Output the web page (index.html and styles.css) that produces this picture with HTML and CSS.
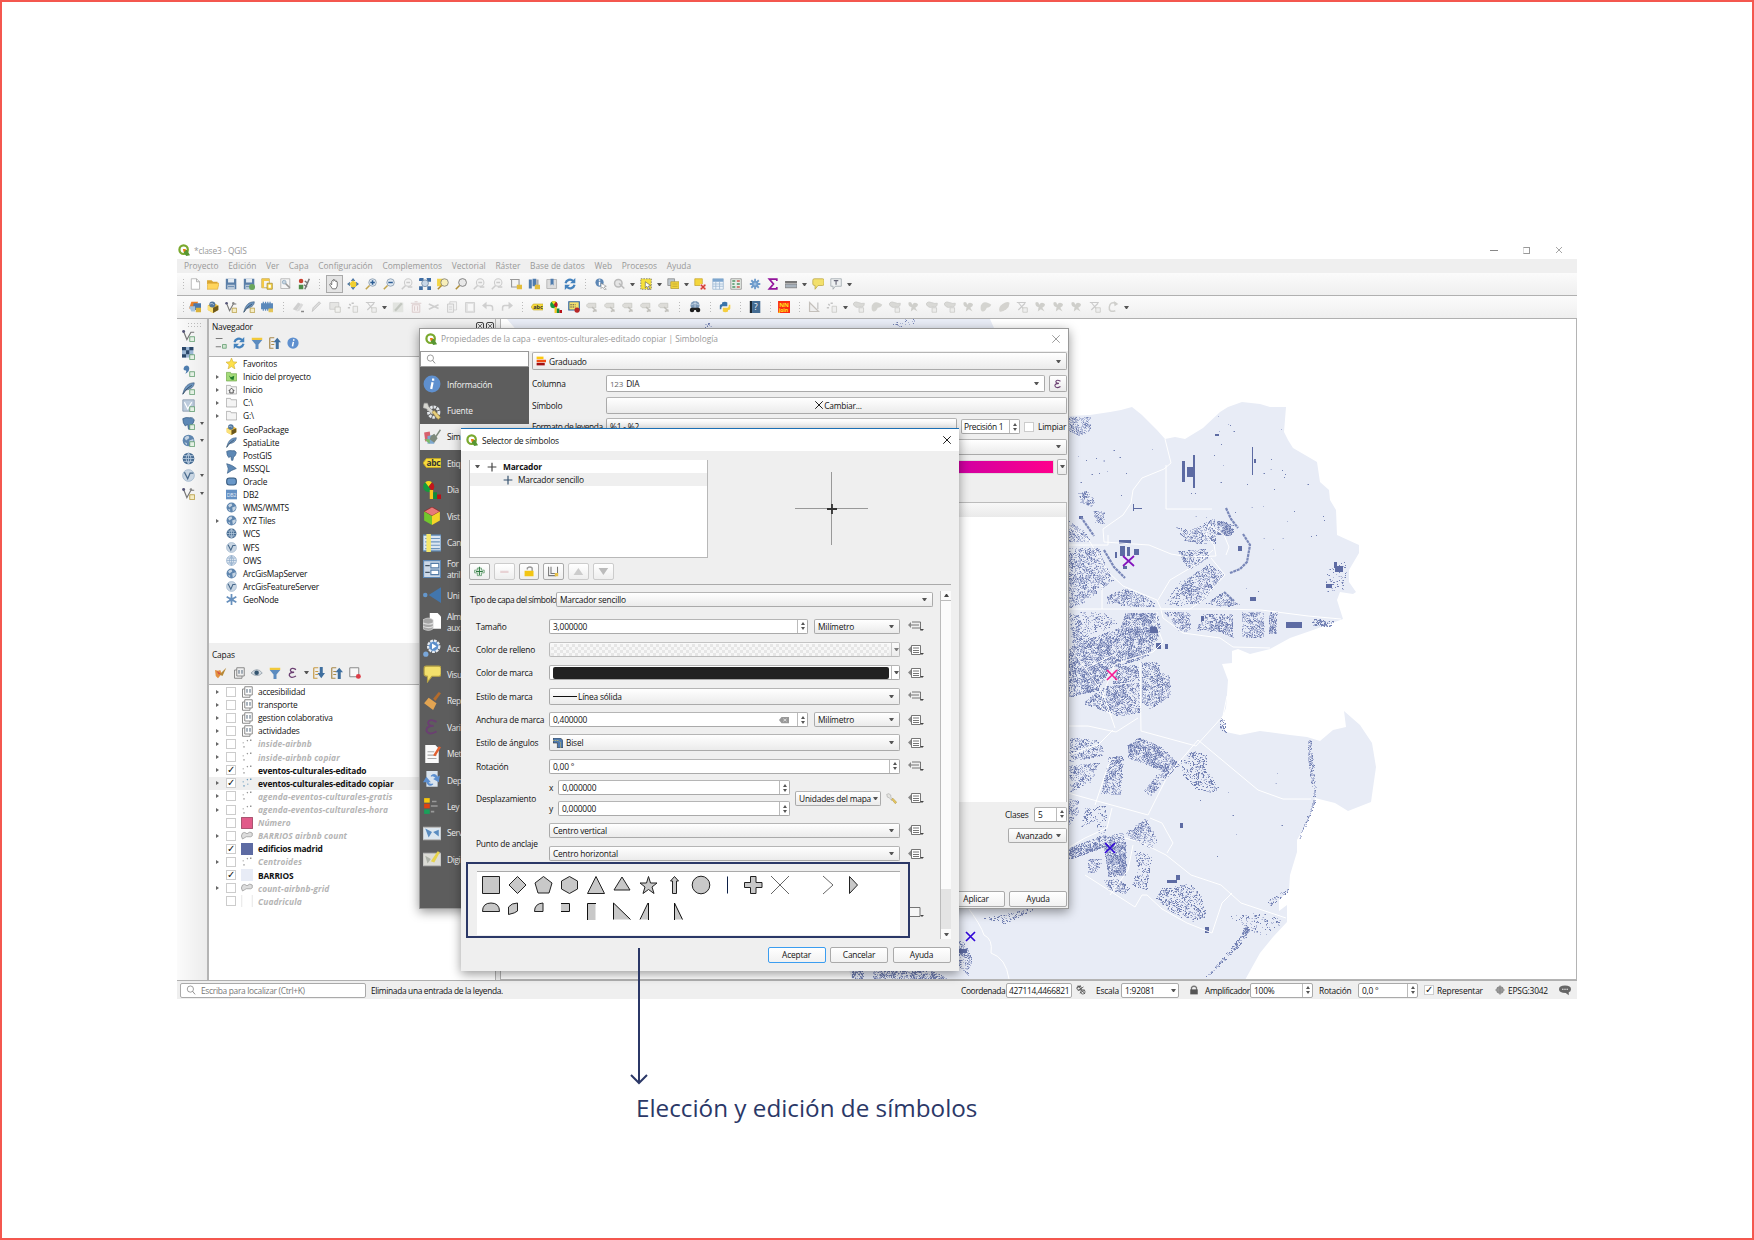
FILE: index.html
```html
<!DOCTYPE html>
<html lang="es">
<head>
<meta charset="utf-8">
<title>QGIS - Selector de símbolos</title>
<link rel="stylesheet" href="styles.css">
</head>
<body>
<svg class="defs" aria-hidden="true">
  <symbol id="q" viewBox="0 0 16 16"><circle cx="7.5" cy="7.5" r="5.6" fill="none" stroke="#7aa92e" stroke-width="3"/><path d="M8 8l4 0 4 7-5 1-3-4z" fill="#589632"/><path d="M6.5 6.5h4l-1 3-2 1z" fill="#ee7913"/></symbol>
  <symbol id="new" viewBox="0 0 16 16"><path d="M3 1h7l4 4v10H3z" fill="#fff" stroke="#aaa"/><path d="M10 1v4h4" fill="none" stroke="#999"/></symbol>
  <symbol id="open" viewBox="0 0 16 16"><path d="M0 3h6l2 2h6v3H0z" fill="#d9a634"/><path d="M1 7h15l-2 8H0z" fill="#ffd55c" stroke="#d9a634" stroke-width=".8"/></symbol>
  <symbol id="save" viewBox="0 0 16 16"><path d="M1 1h14v14H1z" fill="#5b7fa8"/><path d="M4 1h8v5H4z" fill="#e4ebf2"/><path d="M3 9h10v6H3z" fill="#b9c8d8"/><path d="M4 11h8v1H4z" fill="#5b7fa8"/></symbol>
  <symbol id="saveas" viewBox="0 0 16 16"><use href="#save"/><circle cx="12" cy="12" r="4" fill="#6aa65b"/></symbol>
  <symbol id="layout" viewBox="0 0 16 16"><path d="M1 1h10v12H1z" fill="#f4f4f4" stroke="#b5973a"/><path d="M1 1h3v12H1zM4 1h7v3H4z" fill="#f2c846"/><path d="M8 7h7v8H8z" fill="#f7d64a" stroke="#a58a2c"/><path d="M10 9h3v4h-3z" fill="#fff"/></symbol>
  <symbol id="mgr" viewBox="0 0 16 16"><path d="M1 1h12v13H1z" fill="#f6f6f6" stroke="#aaa"/><path d="M5 5l8 8" stroke="#9a9a9a" stroke-width="2.2"/><circle cx="5.5" cy="5.500" r="2.5" fill="#c9d5df" stroke="#8fa9bf"/></symbol>
  <symbol id="style" viewBox="0 0 16 16"><circle cx="4" cy="4" r="3" fill="#c8402f"/><path d="M1 9h6v6H1z" fill="#4e8c4a"/><path d="M9 15L15 1M9 4l4 3M8 9l4 3" stroke="#777" stroke-width="2"/></symbol>
  <symbol id="hand" viewBox="0 0 16 16"><path d="M5 15l-4-6 1-1.500 2 1.500V4l1-1 1 1V2l1-1 1 1v1l1-1 1 1v2l1-1 1 1v6l-2 4z" fill="#fff" stroke="#444"/></symbol>
  <symbol id="panmap" viewBox="0 0 16 16"><path d="M5 5h7v7H5z" fill="#f1cf30"/><path d="M8 0l3 4H5zM8 16l3-4H5zM0 8l4-3v6zM16 8l-4-3v6z" fill="#4d76a6"/><path d="M8 3l5 5-5 5-5-5z" fill="#f1cf30"/></symbol>
  <symbol id="zin" viewBox="0 0 16 16"><circle cx="10" cy="6" r="5" fill="#dfe8f1" stroke="#7f93a8"/><path d="M6 10l-5 5" stroke="#c2a44a" stroke-width="2"/><path d="M7 6h6M10 3v6" stroke="#2c5d94" stroke-width="2"/></symbol>
  <symbol id="zout" viewBox="0 0 16 16"><circle cx="10" cy="6" r="5" fill="#dfe8f1" stroke="#7f93a8"/><path d="M6 10l-5 5" stroke="#c2a44a" stroke-width="2"/><path d="M7 6h6" stroke="#2c5d94" stroke-width="2"/></symbol>
  <symbol id="zg" viewBox="0 0 16 16"><circle cx="9.500" cy="6" r="5" fill="#f3f3f3" stroke="#ccc" stroke-width="1.400"/><path d="M6 10l-5 5" stroke="#ccc" stroke-width="2"/><path d="M7 6h5M9 12h6" stroke="#ccc" stroke-width="2"/></symbol>
  <symbol id="zfull" viewBox="0 0 16 16"><path d="M1 0h5v4H0V1zM10 0h6v5h-5zM0 11h5v5H0zM11 11h5v5h-5z" fill="#3f6da3"/><circle cx="8" cy="7" r="4.500" fill="#c9d8e8" stroke="#657f9b"/></symbol>
  <symbol id="zsel" viewBox="0 0 16 16"><path d="M0 1h9v10H0z" fill="#f3d545"/><circle cx="10" cy="6" r="5" fill="#f7eeb9" stroke="#777"/><path d="M6 10l-5 5" stroke="#b08e35" stroke-width="2"/></symbol>
  <symbol id="zlay" viewBox="0 0 16 16"><circle cx="10" cy="6" r="5.200" fill="#e8e8e8" stroke="#666"/><path d="M6 10l-5 5" stroke="#b08e35" stroke-width="2"/></symbol>
  <symbol id="nmap" viewBox="0 0 16 16"><path d="M2 2h10v10H2zM0 2h3M12 2v12" fill="#f4f4f4" stroke="#999" stroke-width="1.500"/><path d="M9 9h7v6H9z" fill="#e3bd3c"/></symbol>
  <symbol id="bm" viewBox="0 0 16 16"><path d="M1 2h4v12H1zM6 1h5v10H6z" fill="#4f7cae"/><path d="M11 2h3v9h-3z" fill="#aaa"/><path d="M9 9h7v6H9z" fill="#e3bd3c"/></symbol>
  <symbol id="bm2" viewBox="0 0 16 16"><path d="M1 2h13v12H1z" fill="#ddd" stroke="#aaa"/><path d="M6 1h4v9L8 8l-2 2z" fill="#4f7cae"/></symbol>
  <symbol id="refresh" viewBox="0 0 16 16"><path d="M2 7a6 6 0 0 1 10-3M14 9a6 6 0 0 1-10 3" fill="none" stroke="#4482bd" stroke-width="3"/><path d="M15 0v7H8zM1 16V9h7z" fill="#4482bd"/></symbol>
  <symbol id="ident" viewBox="0 0 16 16"><circle cx="6" cy="6" r="5.500" fill="#5d87b5"/><path d="M6 2v1.500M6 5v5" stroke="#fff" stroke-width="2"/><path d="M8 7l7 4-3 1 3 3-2 1-3-4-2 2z" fill="#fff" stroke="#777" stroke-width=".7"/></symbol>
  <symbol id="actg" viewBox="0 0 16 16"><circle cx="7" cy="7" r="5" fill="#e5e5e5" stroke="#bbb" stroke-width="2"/><path d="M8 7l7 7" stroke="#bbb" stroke-width="2"/></symbol>
  <symbol id="sel" viewBox="0 0 16 16"><path d="M1 1h14v14H1z" fill="#f6e13c" stroke="#666" stroke-dasharray="2 1.500"/><path d="M7 5l7 5-3 1 2 4-2 0-2-4-2 2z" fill="#fff" stroke="#555" stroke-width=".8"/></symbol>
  <symbol id="selv" viewBox="0 0 16 16"><path d="M1 1h9v9H1z" fill="#bfc8cf" stroke="#888"/><path d="M5 5h11v9H5z" fill="#f4d63c" stroke="#b39e37"/><path d="M7 8h7M7 11h7" stroke="#b39e37"/></symbol>
  <symbol id="desel" viewBox="0 0 16 16"><path d="M1 1h10v9H1z" fill="#f4d63c" stroke="#c5a62f"/><path d="M8 8h8v8H8z" fill="#f6dcd8"/><path d="M9 9l6 6M15 9l-6 6" stroke="#d53b35" stroke-width="2"/></symbol>
  <symbol id="table" viewBox="0 0 16 16"><path d="M1 1h14v14H1z" fill="#eef4fa" stroke="#9ab6d2"/><path d="M1 1h14v4H1z" fill="#7da6cf"/><path d="M1 8h14M1 11h14M5 4v11M10 4v11" stroke="#9ab6d2"/></symbol>
  <symbol id="calc" viewBox="0 0 16 16"><path d="M1 1h14v14H1z" fill="#e9efe9" stroke="#888"/><path d="M3 4h4M3 8h3M9 8h4M3 12h4" stroke="#4b9264" stroke-width="2"/><path d="M9 4h4M9 12h4" stroke="#cc5a50" stroke-width="2"/></symbol>
  <symbol id="gear" viewBox="0 0 16 16"><circle cx="8" cy="8" r="4.500" fill="#7ba5d2"/><path d="M8 1v14M1 8h14M3 3l10 10M13 3L3 13" stroke="#6e9bcb" stroke-width="2.400"/><circle cx="8" cy="8" r="2" fill="#9fc0e2"/></symbol>
  <symbol id="sigma" viewBox="0 0 16 16"><path d="M13 4V1.500H3L8.500 8 3 14.500h10V12" fill="none" stroke="#93149b" stroke-width="2.300"/></symbol>
  <symbol id="ruler" viewBox="0 0 16 16"><path d="M0 4h16v3H0z" fill="#777"/><path d="M0 8h16v5H0z" fill="#a9b3bd" stroke="#777"/></symbol>
  <symbol id="tip" viewBox="0 0 16 16"><path d="M3 1h11q2 0 2 2v5q0 2-2 2H8l-4 5v-5q-3 0-3-2V3q0-2 2-2z" fill="#f3e06c" stroke="#b9a545"/></symbol>
  <symbol id="annot" viewBox="0 0 16 16"><path d="M1 1h14v10H7l-3 4v-4H1z" fill="#eef0f1" stroke="#9aa3a8"/><path d="M5 3.500h6M8 3.500V9" stroke="#667" stroke-width="1.500"/></symbol>
  <symbol id="dsm" viewBox="0 0 16 16"><path d="M3 1h9l-3 9H0z" fill="#e87f27"/><path d="M6 3h10v9H5z" fill="#4a77ab"/><path d="M0 7h8v7H3z" fill="#a5c3df"/><path d="M9 9h7v6H9z" fill="#d9b23b"/></symbol>
  <symbol id="gpkg" viewBox="0 0 16 16"><path d="M1 6l7-4 7 4v6l-7 4-7-4z" fill="#e9b93a"/><path d="M1 6l7 3v7l-7-4z" fill="#fbe27a"/><path d="M8 9l7-3v6l-7 4z" fill="#6b571c"/><circle cx="7" cy="4.500" r="4" fill="#51779f"/><path d="M4 4q3-2 5 1" stroke="#cbd9e7" fill="none"/></symbol>
  <symbol id="vnew" viewBox="0 0 16 16"><path d="M2 3l4 10 5-9h4" fill="none" stroke="#777" stroke-width="1.400"/><circle cx="2" cy="3" r="1.800" fill="#557"/><circle cx="11" cy="3" r="1.600" fill="#888"/><path d="M9.500 9.500h6v6h-6z" fill="#f5ecc3" stroke="#b3983c"/></symbol>
  <symbol id="vadd" viewBox="0 0 16 16"><path d="M2 3l4 10 5-9h4" fill="none" stroke="#777" stroke-width="1.400"/><circle cx="2" cy="3" r="1.800" fill="#557"/><path d="M9.500 9.500h6v6h-6z" fill="#e4f0e4" stroke="#5d9a6b"/></symbol>
  <symbol id="feather" viewBox="0 0 16 16"><path d="M1 15C3 5 8 1 15 1c0 5-4 8-11 9z" fill="#6b93bd" stroke="#3f5f80" stroke-width=".8"/><path d="M1 15Q6 7 12 4" stroke="#33495e" fill="none"/></symbol>
  <symbol id="fnew" viewBox="0 0 16 16"><use href="#feather"/><path d="M9.500 9.500h6v6h-6z" fill="#f5ecc3" stroke="#b3983c"/></symbol>
  <symbol id="fadd" viewBox="0 0 16 16"><use href="#feather"/><path d="M9.500 9.500h6v6h-6z" fill="#e4f0e4" stroke="#5d9a6b"/></symbol>
  <symbol id="chip" viewBox="0 0 16 16"><path d="M0 3h16v8H0z" fill="#5b89bb"/><path d="M3 1v12M6 1v12M9 1v12M12 1v12" stroke="#5b89bb" stroke-width="1.600"/><path d="M10 10h6v5h-6z" fill="#e3c55a"/></symbol>
  <symbol id="pen" viewBox="0 0 16 16"><path d="M3 14l1-5 8-8 2 2-8 8z" fill="#dcdcdc" stroke="#bdbdbd"/></symbol>
  <symbol id="pens" viewBox="0 0 16 16"><path d="M1 11l7-9 4 2-6 9z" fill="#cfcfcf"/><path d="M6 14l6-11 3 2-5 8z" fill="#dadada"/><path d="M12 14h4" stroke="#888" stroke-width="2"/></symbol>
  <symbol id="g1" viewBox="0 0 16 16"><path d="M1 2h12v9H1z" fill="#e5e5e3" stroke="#c7c7c5"/><path d="M8 8h7v7H8z" fill="#f2f2ef" stroke="#c0c0bc"/></symbol>
  <symbol id="g2" viewBox="0 0 16 16"><path d="M1 9h3M6 3h3M3 4l2 2" stroke="#c4c4c4" stroke-width="2"/><path d="M8 7h6v8H8z" fill="#eee" stroke="#c5c5c2"/></symbol>
  <symbol id="g3" viewBox="0 0 16 16"><path d="M1 2h12M3 2l8 10M12 3L3 12" stroke="#cacaca" stroke-width="1.500"/><path d="M9 9h6v6H9z" fill="#eee" stroke="#c5c5c2"/></symbol>
  <symbol id="gedit" viewBox="0 0 16 16"><path d="M1 2h14v13H1z" fill="#e2e4e0"/><path d="M4 13l9-10" stroke="#c3c7c0" stroke-width="3"/></symbol>
  <symbol id="trash" viewBox="0 0 16 16"><path d="M3 5h10v10H3zM1 3h14M6 1h4M6 7v6M10 7v6" fill="#f5efef" stroke="#d8c8c8" stroke-width="1.200"/></symbol>
  <symbol id="cut" viewBox="0 0 16 16"><path d="M1 4l13 6M1 11l13-6" stroke="#cfcfcf" stroke-width="2"/></symbol>
  <symbol id="copy" viewBox="0 0 16 16"><path d="M5 1h9v11H5z" fill="#f2f2f2" stroke="#ccc"/><path d="M2 4h8v11H2z" fill="#eee" stroke="#c3c3c3"/><path d="M4 8h4M4 11h4" stroke="#ccc"/></symbol>
  <symbol id="paste" viewBox="0 0 16 16"><path d="M2 2h12v13H2z" fill="#e2e2e2" stroke="#c9c9c9"/><path d="M5 4h7v9H5z" fill="#f7f7f7"/></symbol>
  <symbol id="undo" viewBox="0 0 16 16"><path d="M2 6h9q3 0 3 3v4" fill="none" stroke="#cfcfcf" stroke-width="2"/><path d="M6 1v10L0 6z" fill="#cfcfcf"/></symbol>
  <symbol id="redo" viewBox="0 0 16 16"><path d="M14 6H5Q2 6 2 9v4" fill="none" stroke="#cfcfcf" stroke-width="2"/><path d="M10 1v10l6-5z" fill="#cfcfcf"/></symbol>
  <symbol id="label" viewBox="0 0 16 16"><path d="M3 4h13v8H3L0 8z" fill="#f7dc3c" stroke="#c3a728" stroke-width=".8"/><text x="3" y="10.500" font-size="7.500" font-weight="700" letter-spacing="-.2" fill="#333">abc</text></symbol>
  <symbol id="diag" viewBox="0 0 16 16"><circle cx="5" cy="5" r="4.800" fill="#159a3e"/><path d="M5 5L2 1q3-2 6 0z" fill="#f5d51c"/><path d="M5 5l3-4a5 5 0 0 1 0 8z" fill="#c4151c"/><path d="M6 8h3v8H6z" fill="#f5c51c"/><path d="M9 10h3.500v6H9z" fill="#0f8a3c"/><path d="M12.500 12H16v4h-3.500z" fill="#b81018"/></symbol>
  <symbol id="abc" viewBox="0 0 16 16"><path d="M1 1h14v11H1z" fill="#f6e26b" stroke="#2c62a3" stroke-width="1.500"/><path d="M3 5h7M3 8h7" stroke="#555" stroke-width="1.600" stroke-dasharray="2 1"/><circle cx="12" cy="12" r="3.500" fill="#b92727"/></symbol>
  <symbol id="lg" viewBox="0 0 16 16"><path d="M3 3h10v6H3L0 6z" fill="#dddcd8" stroke="#c6c5c1"/><path d="M8 8l6 6M9 14l5-2" stroke="#c0bfba" stroke-width="2"/></symbol>
  <symbol id="bino" viewBox="0 0 16 16"><circle cx="8" cy="6" r="6" fill="#7c99b7"/><path d="M3 5q5-4 10 0M8 0v12" stroke="#d1dfec" fill="none"/><circle cx="4" cy="12" r="3" fill="#1c1c1c"/><circle cx="12" cy="12" r="3" fill="#1c1c1c"/><path d="M4 9h8v3H4z" fill="#222"/></symbol>
  <symbol id="py" viewBox="0 0 16 16"><path d="M4 2q4-2 7 0v5H5q-2 0-2 4H1V6q0-2 3-2z" fill="#3a74a8"/><path d="M12 14q-4 2-7 0V9h6q2 0 2-4h2v5q0 2-3 2z" fill="#f5ce3e"/></symbol>
  <symbol id="help" viewBox="0 0 16 16"><path d="M1 0h3v16H1z" fill="#1c2731"/><path d="M4 0h11v16H4z" fill="#446c93"/><text x="6.500" y="12" font-size="11" fill="#fff">?</text></symbol>
  <symbol id="nn" viewBox="0 0 16 16"><path d="M0 0h16v16H0z" fill="#fb2d12"/><text x="1.500" y="7.500" font-size="8" font-weight="700" fill="#ffe21c">NN</text><text x="1" y="14.500" font-size="7" font-weight="700" fill="#ffe21c">join</text></symbol>
  <symbol id="tri" viewBox="0 0 16 16"><path d="M2 2v12h12z" fill="#eee" stroke="#c4c0bb" stroke-width="1.600"/><path d="M13 2v9" stroke="#ccc" stroke-width="2"/></symbol>
  <symbol id="blob" viewBox="0 0 16 16"><path d="M0 4q2-4 7-2t8 1q0 6-6 5-6 2-9-4z" fill="#d9d9d6" stroke="#c8c8c5"/><path d="M8 9h6v6H8z" fill="#ececea" stroke="#c8c8c5"/></symbol>
  <symbol id="blob2" viewBox="0 0 16 16"><path d="M1 6q3-6 8-4t6 3q-2 4-6 4-3 6-6 5t-2-8z" fill="#d4d4d0"/></symbol>
  <symbol id="blob3" viewBox="0 0 16 16"><path d="M2 2q4-2 5 3 2-4 6-2t-2 6l3 5-5-3-4 3 1-6q-5-1-4-6z" fill="#cfcfcb"/></symbol>
  <symbol id="leaf" viewBox="0 0 16 16"><path d="M2 14Q0 8 6 4t9-2q1 5-4 9t-9 3z" fill="#d4d3cf"/></symbol>
  <symbol id="rot" viewBox="0 0 16 16"><path d="M12 3Q4 0 3 8t8 5" fill="none" stroke="#cfcfcc" stroke-width="2"/><path d="M9 0l6 4-5 3z" fill="#cfcfcc"/></symbol>
  <symbol id="raster" viewBox="0 0 16 16"><path d="M0 0h14v13H0z" fill="#9cb7d4"/><path d="M0 0h5v4H0zM9 0h5v4H9zM5 4h4v5H5zM0 9h5v4H0z" fill="#2b486a"/><path d="M9.500 9.500h6v6h-6z" fill="#e4f0e4" stroke="#5d9a6b"/></symbol>
  <symbol id="comma" viewBox="0 0 16 16"><path d="M3 3q5-3 6 2 0 5-5 7 2-3 1-4-5 0-2-5z" fill="#4e7dae"/><path d="M9.500 9.500h6v6h-6z" fill="#e4f0e4" stroke="#5d9a6b"/></symbol>
  <symbol id="vbox" viewBox="0 0 16 16"><path d="M1 1h14v14H1z" fill="#bccbdc" stroke="#8799ac"/><path d="M3 4l4 8 5-8" stroke="#fff" fill="none" stroke-width="1.500"/><path d="M9.500 9.500h6v6h-6z" fill="#e4f0e4" stroke="#5d9a6b"/></symbol>
  <symbol id="pg" viewBox="0 0 16 16"><path d="M1 2q4-2 8-1 5-1 6 3-1 5-4 6l-1 5H8L7 9 4 11q-3-3-3-9z" fill="#5d88b5" stroke="#3c6189"/></symbol>
  <symbol id="pga" viewBox="0 0 16 16"><use href="#pg"/><path d="M9.500 9.500h6v6h-6z" fill="#e4f0e4" stroke="#5d9a6b"/></symbol>
  <symbol id="ms" viewBox="0 0 16 16"><path d="M1 1q9 2 14 7-7 2-13 7 3-6-1-14z" fill="#5d88b5" stroke="#3c6189"/></symbol>
  <symbol id="ora" viewBox="0 0 16 16"><rect x="1" y="3" width="14" height="10" rx="4" fill="#6a98c8" stroke="#35587d" stroke-width="1.500"/></symbol>
  <symbol id="db2" viewBox="0 0 16 16"><path d="M0 1h16v14H0z" fill="#6591c4"/><text x="1" y="11" font-size="7.500" fill="#e6eef8">DB2</text></symbol>
  <symbol id="globe" viewBox="0 0 16 16"><circle cx="8" cy="8" r="7.200" fill="#5f86af"/><path d="M3 5q2-3 5-3l1 3-4 3zM9 8l5-2v4l-4 4zM3 10l3 1v3z" fill="#c5d4e3"/></symbol>
  <symbol id="globea" viewBox="0 0 16 16"><use href="#globe"/><path d="M9.500 9.500h6v6h-6z" fill="#e4f0e4" stroke="#5d9a6b"/></symbol>
  <symbol id="globe2" viewBox="0 0 16 16"><circle cx="8" cy="8" r="7.200" fill="#456a91"/><path d="M1 8h14M8 1v14M2 4.500h12M2 11.500h12M8 1q-6 7 0 14M8 1q6 7 0 14" stroke="#b9cde0" fill="none"/></symbol>
  <symbol id="globe3" viewBox="0 0 16 16"><circle cx="8" cy="8" r="7.200" fill="#dfe8f1" stroke="#8eabc9"/><path d="M1 8h14M8 1v14M2 4.500h12M2 11.500h12M8 1q-6 7 0 14M8 1q6 7 0 14" stroke="#8eabc9" fill="none"/></symbol>
  <symbol id="globev" viewBox="0 0 16 16"><circle cx="8" cy="8" r="7.200" fill="#c9d6e3" stroke="#9fb6cd"/><path d="M3 4l4 8 3-7h4" stroke="#48698b" fill="none" stroke-width="1.600"/></symbol>
  <symbol id="flake" viewBox="0 0 16 16"><path d="M8 0v16M1 4l14 8M15 4L1 12" stroke="#6790bd" stroke-width="2.500"/><circle cx="8" cy="8" r="3" fill="#6790bd"/></symbol>
  <symbol id="star" viewBox="0 0 16 16"><path d="M8 0l2.200 5.500L16 6l-4.500 3.800L13 16l-5-3.500L3 16l1.500-6.200L0 6l5.800-.5z" fill="#fde04a" stroke="#caa82d" stroke-width=".8"/></symbol>
  <symbol id="phome" viewBox="0 0 16 16"><path d="M.5 2h6l1 2h8v10.500H.5z" fill="#a5dc7a" stroke="#6ea548"/><path d="M4 6l3 3 5-2-1 6-4-1z" fill="#1f7a2b"/></symbol>
  <symbol id="home" viewBox="0 0 16 16"><path d="M.5 2h6l1 2h8v10.500H.5z" fill="#f4f4f4" stroke="#999"/><path d="M4 10l4-4 4 4M5.500 9v4h5V9" fill="none" stroke="#333" stroke-width="1.200"/></symbol>
  <symbol id="fold" viewBox="0 0 16 16"><path d="M.5 2h6l1 2h8v10.500H.5z" fill="#f4f4f4" stroke="#999"/></symbol>
  <symbol id="addl" viewBox="0 0 16 16"><path d="M1 2h9M1 13h7" stroke="#777" stroke-width="1.300"/><path d="M10 10h5v5h-5z" fill="#cfe5d0" stroke="#5d9a6b"/></symbol>
  <symbol id="filter" viewBox="0 0 16 16"><path d="M1 1h14v3H1z" fill="#f1c93b"/><path d="M1 4h14l-5 6v6H6v-6z" fill="#5c8cc0"/></symbol>
  <symbol id="coll" viewBox="0 0 16 16"><path d="M1 1h6M1 1v14h5M3 6h4M3 10h4" stroke="#a98a4d" stroke-width="1.600" fill="none"/><path d="M9 16V7H6l5-6 5 6h-3v9z" fill="#3f6f9f"/></symbol>
  <symbol id="expd" viewBox="0 0 16 16"><path d="M1 1h6M1 1v14h5M3 6h4M3 10h4" stroke="#c79a45" stroke-width="1.600" fill="none"/><path d="M9 0v8H6l5 7 5-7h-3V0z" fill="#3f6f9f"/></symbol>
  <symbol id="info" viewBox="0 0 16 16"><circle cx="8" cy="8" r="7.500" fill="#5f90cf"/><path d="M9 3v2M8.500 6.500L7.300 12.500" stroke="#fff" stroke-width="2" fill="none"/></symbol>
  <symbol id="brush" viewBox="0 0 16 16"><path d="M0 4l4 1 3-1 2 5-5 6-3-3z" fill="#e3913e"/><path d="M2 5l3 5 3-1z" fill="#d14c4c"/><path d="M6 10l4 2 5-11z" fill="#b78938"/></symbol>
  <symbol id="grp" viewBox="0 0 16 16"><path d="M5 1h10v11H5zM5 4H2v11h10v-3" fill="none" stroke="#888" stroke-width="1.300"/><path d="M8 4v5M12 4v5" stroke="#68798a" stroke-width="1.500"/></symbol>
  <symbol id="eye" viewBox="0 0 16 16"><path d="M0 8q8-9 15 0-7 7-15 0z" fill="#d7dde3" stroke="#8b98a4"/><circle cx="7.500" cy="7.500" r="3" fill="#33546f"/></symbol>
  <symbol id="eps" viewBox="0 0 16 16"><path d="M12 3.500Q6 0 4.500 4q0 3 5 3Q3 7 3 11q2 5 9 1" fill="none" stroke="#6b3f72" stroke-width="1.700"/></symbol>
  <symbol id="rem" viewBox="0 0 16 16"><path d="M1 1h12v12H1z" fill="#f8f8f8" stroke="#888" stroke-width="1.300"/><circle cx="12.500" cy="12.500" r="3.300" fill="#dd3d46"/></symbol>
  <symbol id="pts" viewBox="0 0 16 16"><path d="M3 6v1M4 11v1.500M8 4l1-1M13 2v2" stroke="#8b8b8b" stroke-width="1.800"/></symbol>
  <symbol id="ptsb" viewBox="0 0 16 16"><path d="M3 6v1M4 11v1.500M8 4l1-1M13 2v2M9 9v1" stroke="#5c93b9" stroke-width="1.800"/></symbol>
  <symbol id="poly" viewBox="0 0 16 16"><path d="M2 4q3-2 6 1 4-4 7-1 1 5-2 5l-6 0-5 3Q-1 8 2 4z" fill="#ddd" stroke="#999"/></symbol>
  <symbol id="pink" viewBox="0 0 16 16"><path d="M.5.500h15v15H.5z" fill="#e15a89" stroke="#87324f"/></symbol>
  <symbol id="blue" viewBox="0 0 16 16"><path d="M0 0h16v16H0z" fill="#5d6ba3"/></symbol>
  <symbol id="pale" viewBox="0 0 16 16"><path d="M0 0h16v16H0z" fill="#e8ecf6"/></symbol>
  <symbol id="grid" viewBox="0 0 16 16"><path d="M1 0v16M15 0v16" stroke="#ddd"/></symbol>
  <symbol id="tools" viewBox="0 0 16 16"><circle cx="9.500" cy="9" r="4.600" fill="none" stroke="#e2e6ea" stroke-width="2.600" stroke-dasharray="2.200 .8"/><path d="M1 1l3 0 1 3 5 5-2 2-5-5-3-1z" fill="#d6d6d0" stroke="#999" stroke-width=".5"/><path d="M8 9l2-1.500 5.500 6-2 2z" fill="#e8cf7c" stroke="#a48a3c" stroke-width=".5"/></symbol>
  <symbol id="tool2" viewBox="0 0 16 16"><path d="M1 2l3-1 3 2 0 3 3 3-2 2-3-4-3-1z" fill="#e4e4e0" stroke="#999" stroke-width=".7"/><path d="M8 9l2-1.500 5.500 6-2 2z" fill="#e8c75c" stroke="#a48a3c" stroke-width=".7"/></symbol>
  <symbol id="palette" viewBox="0 0 16 16"><path d="M1 4l5-1 1 8-5 1z" fill="#d85f6c"/><path d="M4 7l6-1 0 8-6 0z" fill="#7ea8cf"/><path d="M1 10l5 0 0 4z" fill="#7abb66"/><path d="M7 7l3-2 3 4-3 4-4-3zM11 7l4-6 1 1-4 6z" fill="#7e8a7c"/></symbol>
  <symbol id="cube" viewBox="0 0 16 16"><path d="M8 0l7 4-7 4-7-4z" fill="#e77a7a" stroke="#8d2020" stroke-width=".6"/><path d="M1 4l7 4v8l-7-4z" fill="#72c72d"/><path d="M15 4L8 8v8l7-4z" fill="#f5d528"/></symbol>
  <symbol id="fields" viewBox="0 0 16 16"><path d="M0 1h16v14H0z" fill="#dbe6f1" stroke="#6390bd"/><path d="M2 4h13M2 7h13M2 10h13M2 13h13" stroke="#6e94ba"/><path d="M3 0h4v16H3z" fill="#f5e66a"/></symbol>
  <symbol id="form" viewBox="0 0 16 16"><path d="M.5.500h15v15H.5z" fill="#ccd9e7" stroke="#5c87b5"/><path d="M7 3h7v4H7zM7 9h7v4H7z" fill="#fff" stroke="#557da8"/><path d="M2 5h4M2 11h4" stroke="#456"/></symbol>
  <symbol id="join" viewBox="0 0 16 16"><circle cx="2" cy="8" r="2" fill="#6597cc"/><path d="M5 8l11-7v14z" fill="#4276ad"/></symbol>
  <symbol id="aux" viewBox="0 0 16 16"><path d="M6 0h7l3 3v11H6z" fill="#fff"/><path d="M0 6q5-3 9 0v8q-4 3-9 0z" fill="#a5a5a5" stroke="#ddd" stroke-width=".6"/><path d="M0 9q5 2 9 0M0 12q5 2 9 0" stroke="#ddd" fill="none"/></symbol>
  <symbol id="act" viewBox="0 0 16 16"><circle cx="9.500" cy="6.500" r="5" fill="#5c8fcb" stroke="#e5eaf0" stroke-width="2" stroke-dasharray="2.500 .8"/><path d="M8 4l4 2.500L8 9z" fill="#fff"/><circle cx="2.500" cy="13.500" r="2.300" fill="#7aa7d9"/></symbol>
  <symbol id="broom" viewBox="0 0 16 16"><path d="M9 6l5-6 2 1-5 7z" fill="#b36b2b"/><path d="M5 5l7 5-3 6-8-6z" fill="#e2a452"/></symbol>
  <symbol id="meta" viewBox="0 0 16 16"><path d="M2 0h9l3 3v13H2z" fill="#fafafa"/><path d="M4 6h6M4 9h8M4 12h8" stroke="#aaa"/><path d="M9 9l5-8 2 1-5 8z" fill="#e3602f"/></symbol>
  <symbol id="dep" viewBox="0 0 16 16"><path d="M3 0h10v14H3z" fill="#dae4ee"/><path d="M7 4q4-3 6 1l2-1-1 6-5-3 2-1q-2-2-4-1zM9 12q-4 3-6-2H0l3-5 4 5H5q1 2 4 1z" fill="#5c8fd0"/></symbol>
  <symbol id="leg" viewBox="0 0 16 16"><path d="M1 1h5v4H1z" fill="#f7c80e"/><path d="M1 6h5v4H1z" fill="#de4313"/><path d="M1 11h5v4H1z" fill="#1aa05a"/><path d="M8 4h4M7 8h6M7 13h3" stroke="#999" stroke-width="1.500"/></symbol>
  <symbol id="srv" viewBox="0 0 16 16"><path d="M0 3h16v11H0z" fill="#dbe6ef" stroke="#bbb"/><path d="M2 4l6 3-3 5zM9 7l5-2v6z" fill="#5a8cc0"/></symbol>
  <symbol id="dig" viewBox="0 0 16 16"><path d="M0 3h16v11H0z" fill="#dcdcd6" stroke="#bbb"/><path d="M2 5l5 3-3 4z" fill="#aeb2a8"/><path d="M7 10l6-9 2 1-5 9z" fill="#e6d34b"/></symbol>
  <symbol id="mag" viewBox="0 0 16 16"><circle cx="7" cy="6.500" r="5" fill="none" stroke="#888" stroke-width="1.300"/><path d="M10.500 10l4 5" stroke="#888" stroke-width="1.500"/></symbol>
  <symbol id="grad" viewBox="0 0 16 16"><path d="M1 1h11v4H1z" fill="#fdc80d"/><path d="M1 6h15v4H1z" fill="#f04c12"/><path d="M1 11h13v4H1z" fill="#a30f12"/></symbol>
  <symbol id="x" viewBox="0 0 16 16"><path d="M2 2l12 12M14 2L2 14" stroke="currentColor" stroke-width="1.500"/></symbol>
  <symbol id="plus" viewBox="0 0 16 16"><path d="M8 1v14M1 8h14" stroke="currentColor" stroke-width="1.900"/></symbol>
  <symbol id="addg" viewBox="0 0 16 16"><path d="M5 3h6v3h4v4h-4v4H5v-4H1V6h4z" fill="#e8f3e8" stroke="#4b8c5b"/><path d="M8 1v12M3 8h10" stroke="#2f7a42" stroke-width="1.500"/></symbol>
  <symbol id="minus" viewBox="0 0 16 16"><path d="M2 7h12v3H2z" fill="#e8d3d5"/></symbol>
  <symbol id="lock" viewBox="0 0 16 16"><path d="M5 5V3q4-3 7 0v5" fill="none" stroke="#999" stroke-width="2"/><path d="M1 7h13v8H1z" fill="#f2c513"/></symbol>
  <symbol id="lockd" viewBox="0 0 16 16"><path d="M4 8V4q4-4 8 0v4" fill="none" stroke="#777" stroke-width="2"/><path d="M2 7h12v8H2z" fill="#555"/></symbol>
  <symbol id="dup" viewBox="0 0 16 16"><path d="M1 1v13h11M4.500 1v10H14V1" stroke="#777" stroke-width="1.500" fill="#f7f7f7"/><path d="M10 10h5v5h-5z" fill="#e6c14a"/></symbol>
  <symbol id="up" viewBox="0 0 16 16"><path d="M8 3l7 10H1z" fill="#ccc"/></symbol>
  <symbol id="down" viewBox="0 0 16 16"><path d="M8 13l7-10H1z" fill="#bbb"/></symbol>
  <symbol id="dd" viewBox="0 0 16 12"><path d="M4 2h8.500v8.500M3 5h8M4 8h8.500" fill="none" stroke="#666" stroke-width=".9"/><path d="M0 5l3-3v6z" fill="#888"/><path d="M12 9h4l-2 2z" fill="#444"/></symbol>
  <symbol id="dde" viewBox="0 0 16 12"><path d="M3.500 1.500h9v9h-9zM5 4h6M5 6.500h6M5 8.500h6" fill="#fff" stroke="#666" stroke-width=".9"/><path d="M0 5.500l3-3v6z" fill="#888"/><path d="M12 9h4l-2 2z" fill="#444"/></symbol>
  <symbol id="ddb" viewBox="0 0 16 12"><path d="M1 1.500h11v9H1" fill="#f6f6f6" stroke="#666" stroke-width=".9"/><path d="M12 9h4l-2 2z" fill="#444"/></symbol>
  <symbol id="bisel" viewBox="0 0 16 16"><path d="M0 0h12l4 4v12H7V8H0z" fill="#4f7bb0" stroke="#333"/><path d="M0 4h9l3 3v9" stroke="#f0d254" stroke-dasharray="2 1" fill="none"/></symbol>
  <symbol id="clr" viewBox="0 0 16 12"><path d="M0 6l4-5h12v10H4z" fill="#999"/><path d="M7 4l5 4M12 4L7 8" stroke="#fff"/></symbol>
  <symbol id="coord" viewBox="0 0 16 16"><path d="M3 1l11 13M1 5l7-4M3 9l9-6M6 13l8-5" stroke="#555" stroke-width="1.300"/><circle cx="5" cy="5" r="3.500" fill="none" stroke="#333"/><circle cx="11" cy="11" r="3.500" fill="none" stroke="#333"/></symbol>
  <symbol id="crs" viewBox="0 0 16 16"><circle cx="8" cy="8" r="5.500" fill="#aaa" stroke="#777"/><path d="M0 8h16M8 0v16M3 5h10M3 11h10" stroke="#777"/></symbol>
  <symbol id="msg" viewBox="0 0 16 16"><path d="M8 2q8 0 8 5 0 3-3 4v4l-4-3Q0 12 0 7q0-5 8-5z" fill="#666"/><path d="M4 7h8" stroke="#eee" stroke-width="1.600" stroke-dasharray="2 1"/></symbol>
</svg>

<main class="sheet">
  <section class="app">
    <header class="title"><i data-i="q"></i><span>*clase3 - QGIS</span><div class="wctl"><i class="min"></i><i class="max"></i><i data-i="x"></i></div></header>
    <nav class="menu"><span>Proyecto</span><span>Edición</span><span>Ver</span><span>Capa</span><span>Configuración</span><span>Complementos</span><span>Vectorial</span><span>Ráster</span><span>Base de datos</span><span>Web</span><span>Procesos</span><span>Ayuda</span></nav>
    <div class="bar" data-icons="| new open save saveas layout mgr style | hand panmap zin zout zg zfull zsel zlay zg zg nmap bm bm2 refresh | ident actg v sel v selv v desel table calc gear sigma ruler v tip annot v"></div>
    <div class="bar" data-icons="| dsm gpkg vnew fnew chip | pens pen g1 g2 g3 v gedit trash cut copy paste undo redo | label diag abc lg lg lg lg lg | bino | py | help | nn | tri g2 v blob blob2 blob blob3 blob blob blob3 blob2 leaf g3 blob3 blob3 blob3 g3 rot v"></div>
    <div class="work">
      <aside class="side">
        <div class="grip"></div>
        <p><i data-i="vadd"></i></p><p><i data-i="raster"></i></p><p><i data-i="comma"></i></p><p><i data-i="fadd"></i></p><p><i data-i="vbox"></i></p>
        <p class="m"><i data-i="pga"></i></p><p class="m"><i data-i="globea"></i></p><p><i data-i="globe2"></i></p><p class="m"><i data-i="globev"></i></p><p class="m"><i data-i="vnew"></i></p>
      </aside>
      <div class="docks">
        <section class="dock">
          <h2>Navegador<span class="dctl"><i data-i="x"></i><i data-i="x"></i></span></h2>
          <div class="mini" data-icons="addl refresh filter coll info"></div>
          <ul class="tree nav">
            <li><i data-i="star"></i>Favoritos</li>
            <li class="c"><i data-i="phome"></i>Inicio del proyecto</li>
            <li class="c"><i data-i="home"></i>Inicio</li>
            <li class="c"><i data-i="fold"></i>C:\</li>
            <li class="c"><i data-i="fold"></i>G:\</li>
            <li><i data-i="gpkg"></i>GeoPackage</li>
            <li><i data-i="feather"></i>SpatiaLite</li>
            <li><i data-i="pg"></i>PostGIS</li>
            <li><i data-i="ms"></i>MSSQL</li>
            <li><i data-i="ora"></i>Oracle</li>
            <li><i data-i="db2"></i>DB2</li>
            <li><i data-i="globe"></i>WMS/WMTS</li>
            <li class="c"><i data-i="globe"></i>XYZ Tiles</li>
            <li><i data-i="globe2"></i>WCS</li>
            <li><i data-i="globev"></i>WFS</li>
            <li><i data-i="globe3"></i>OWS</li>
            <li><i data-i="globe"></i>ArcGisMapServer</li>
            <li><i data-i="globev"></i>ArcGisFeatureServer</li>
            <li><i data-i="flake"></i>GeoNode</li>
          </ul>
        </section>
        <section class="dock layers">
          <h2>Capas</h2>
          <div class="mini" data-icons="brush grp eye filter eps v expd coll rem"></div>
          <ul class="tree lay">
            <li class="c"><b></b><i data-i="grp"></i>accesibilidad</li>
            <li class="c"><b></b><i data-i="grp"></i>transporte</li>
            <li class="c"><b></b><i data-i="grp"></i>gestion colaborativa</li>
            <li class="c"><b></b><i data-i="grp"></i>actividades</li>
            <li class="c off"><b></b><i data-i="pts"></i>inside-airbnb</li>
            <li class="c off"><b></b><i data-i="pts"></i>inside-airbnb copiar</li>
            <li class="c on"><b>✓</b><i data-i="pts"></i>eventos-culturales-editado</li>
            <li class="c on cur"><b>✓</b><i data-i="ptsb"></i>eventos-culturales-editado copiar</li>
            <li class="c off"><b></b><i data-i="pts"></i>agenda-eventos-culturales-gratis</li>
            <li class="c off"><b></b><i data-i="pts"></i>agenda-eventos-culturales-hora</li>
            <li class="off"><b></b><i data-i="pink"></i>Número</li>
            <li class="c off"><b></b><i data-i="poly"></i>BARRIOS airbnb count</li>
            <li class="on"><b>✓</b><i data-i="blue"></i>edificios madrid</li>
            <li class="c off"><b></b><i data-i="pts"></i>Centroides</li>
            <li class="on"><b>✓</b><i data-i="pale"></i>BARRIOS</li>
            <li class="c off"><b></b><i data-i="poly"></i>count-airbnb-grid</li>
            <li class="off"><b></b><i data-i="grid"></i>Cuadricula</li>
          </ul>
        </section>
      </div>
      <div class="canvas">
        <svg id="map" viewBox="501 319 1075 660">
          <path class="land" d="M507 319H990L994 328 1000 416H1068L1090 415 1110 412 1121 410 1132 407 1142 415 1157 430 1165 439 1175 437 1185 439 1203 428 1220 412 1228 407 1242 402 1260 404 1270 407 1286 407 1284 432 1288 440 1293 448 1317 462 1320 482 1329 490 1330 500 1336 510 1337 535 1359 545 1359 553 1349 570 1349 582 1356 592 1353 594 1340 592 1337 600 1343 619 1313 630 1290 638 1270 649 1250 654 1238 649 1232 651V663L1222 664 1228 680 1226 708 1221 720 1226 732 1240 735 1260 731 1290 735 1307 737 1320 741 1333 730 1346 727 1344 711 1360 725 1372 743 1376 767 1371 802 1348 811 1335 803 1315 798 1310 817 1297 840V852L1290 875 1289 890 1279 900V911L1287 905V922L1273 937 1260 953 1245 980H852L800 800 560 380z"/>
          <g id="buildings"></g>
          <g class="roads">
            <path d="M1165 439l3 12 3 12-7 6-22 9-9 12-2 13-8 12-20 14 1 13 45 3 22 9 18 3 27-1-2-11-8-10 3-10 15 10 5 12-3 8"/>
            <path d="M1166 465v44h46M1108 535v10l-40 0M1068 525l22 17 18 30 15 14 34 14 4 9h-93M1161 609h60l40 1 47 6 33 3M1211 558l14 17-25 27-10 7h-29M1158 600l12-20 27-16 16-14M1161 610l2 8 20 15 37 5 13 9 37 1"/>
            <path d="M1157 612l-1 12 7 18-10 10-38 12-10 25-5 18 12 8M1068 645l15 20 20 28 12 35M1140 662l1 69 55 15 27-30 4-20M1068 726h20l28 6 22-14M1068 755l30-10 15-15M1068 793l80 22 20-40 30-35 60 50 25 9 28 0M1110 760l-15 45M1112 808l-5 20-22 10-17 10M1125 838l15 4 26 13 25 20 30 10 20 18 45 15M1133 845l-5 25-18 25M1085 875l50 32 7-12 5 0 15 14 25 14 25 10 10-30 10-10M1150 818l12 5 11 20-6 10M1088 667l27-13M1102 585v24"/>
            <path d="M966 905q15 20 18 30 9 4 7 18 15 5 18 26"/>
          </g>
          <g class="pts"><path class="a" d="M1123 556l11 10m0-10l-11 10"/><path class="b" d="M1107 670l10 10m0-10l-10 10"/><path class="c" d="M1105 843l10 10m0-10l-10 10M966 932l9 9m0-9l-9 9"/></g>
        </svg>
      </div>
    </div>
    <footer class="status">
      <div class="find"><i data-i="mag"></i>Escriba para localizar (Ctrl+K)</div><span class="s1">Eliminada una entrada de la leyenda.</span>
      <span class="tight">Coordenada</span><div class="fld w66">427114,4466821</div><i data-i="coord"></i><span class="s2">Escala</span><div class="fld w58">1:92081<u class="dn"></u></div>
      <i data-i="lockd" class="s3"></i><span class="tight">Amplificador</span><div class="fld w63">100%<u class="sp"></u></div><span class="s4">Rotación</span><div class="fld w60">0,0 °<u class="sp"></u></div>
      <b class="ck">✓</b><span>Representar</span><i data-i="crs" class="s5"></i><span class="s6">EPSG:3042</span><i data-i="msg" class="s7"></i>
    </footer>
  </section>

  <section class="win props">
    <header class="wt"><i data-i="q"></i>Propiedades de la capa - eventos-culturales-editado copiar | Simbología<i data-i="x" class="cl"></i></header>
    <div class="pbody">
      <ul class="tabs">
        <li class="srch"><i data-i="mag"></i></li>
        <li><i data-i="info"></i>Información</li><li><i data-i="tools"></i>Fuente</li><li class="cur"><i data-i="palette"></i>Sim</li><li><i data-i="label"></i>Etiq</li><li><i data-i="diag"></i>Dia</li><li><i data-i="cube"></i>Vist</li><li><i data-i="fields"></i>Can</li><li><i data-i="form"></i>For<br>atril</li><li><i data-i="join"></i>Uni</li><li><i data-i="aux"></i>Alm<br>aux</li><li><i data-i="act"></i>Acc</li><li><i data-i="tip"></i>Visu</li><li><i data-i="broom"></i>Rep</li><li><i data-i="eps"></i>Vari</li><li><i data-i="meta"></i>Met</li><li><i data-i="dep"></i>Dep</li><li><i data-i="leg"></i>Ley</li><li><i data-i="srv"></i>Serv</li><li><i data-i="dig"></i>Digi</li>
      </ul>
      <div class="pform">
        <div class="cb h18"><i data-i="grad"></i>Graduado<u class="dn"></u></div>
        <div class="pr"><label>Columna</label><div class="cb wh"><small>123</small> DIA<u class="dn"></u></div><div class="cb eb"><i data-i="eps"></i></div></div>
        <div class="pr"><label>Símbolo</label><div class="cb ctr"><i data-i="x"></i>Cambiar...</div></div>
        <div class="pr"><label class="tight">Formato de leyenda</label><div class="cb">%1 - %2</div><div class="cb wh pc">Precisión 1<u class="sp"></u></div><b class="ck"></b><span>Limpiar</span></div>
        <div class="cb h15"><u class="dn"></u></div>
        <div class="pr ramp"><div class="grad"></div><div class="cb rb"><u class="dn"></u></div></div>
        <div class="ptab"><div></div></div>
        <div class="pr cls"><span>Clases</span><div class="cb wh w33">5<u class="sp"></u></div></div>
        <div class="pr adv"><div class="cb w59">Avanzado<u class="dn"></u></div></div>
        <div class="pr btns"><div class="btn">Aplicar</div><div class="btn">Ayuda</div></div>
      </div>
    </div>
  </section>

  <section class="win symb">
    <header class="wt"><i data-i="q"></i>Selector de símbolos<i data-i="x" class="cl"></i></header>
    <div class="top">
      <ul class="stree"><li><u class="dn"></u><i data-i="plus"></i><strong>Marcador</strong></li><li class="cur"><i data-i="plus"></i>Marcador sencillo</li></ul>
      <svg class="prev" viewBox="0 0 74 74"><path d="M36.500 0v73M0 36.500h73" stroke="#999"/><path d="M37 32v10M32 37h10" stroke="#333" stroke-width="1.800"/></svg>
    </div>
    <div class="sbtn"><i data-i="addg"></i><i data-i="minus" class="dis"></i><i data-i="lock"></i><i data-i="dup"></i><i data-i="up" class="dis"></i><i data-i="down" class="dis"></i></div>
    <div class="scroll">
      <div class="form">
        <div class="type"><label>Tipo de capa del símbolo</label><div class="cb">Marcador sencillo<u class="dn"></u></div></div>
        <div class="fr"><label>Tamaño</label><div class="cb wh">3,000000<u class="sp"></u></div><div class="cb un">Milímetro<u class="dn"></u></div><i data-i="dd"></i></div>
        <div class="fr"><label>Color de relleno</label><div class="cb chk"><em></em><u class="dn r"></u></div><i data-i="dde"></i></div>
        <div class="fr"><label>Color de marca</label><div class="cb wh blk"><em></em><u class="dn r"></u></div><i data-i="dde"></i></div>
        <div class="fr"><label>Estilo de marca</label><div class="cb h17"><s></s>Línea sólida<u class="dn"></u></div><i data-i="dd"></i></div>
        <div class="fr"><label>Anchura de marca</label><div class="cb wh">0,400000<i data-i="clr" class="clr"></i><u class="sp"></u></div><div class="cb un">Milímetro<u class="dn"></u></div><i data-i="dde"></i></div>
        <div class="fr"><label>Estilo de ángulos</label><div class="cb h17"><i data-i="bisel"></i>Bisel<u class="dn"></u></div><i data-i="dde"></i></div>
        <div class="fr"><label>Rotación</label><div class="cb wh">0,00 °<u class="sp"></u></div><i data-i="dd"></i></div>
        <div class="fr off2"><label>Desplazamiento</label><div class="xy"><div>x<span class="cb wh">0,000000<u class="sp"></u></span></div><div>y<span class="cb wh">0,000000<u class="sp"></u></span></div></div><div class="cb un">Unidades del mapa<u class="dn"></u></div><i data-i="tool2" class="tl"></i><i data-i="dde"></i></div>
        <div class="fr anc"><label>Punto de anclaje</label><div class="two"><div class="cb">Centro vertical<u class="dn"></u></div><div class="cb">Centro horizontal<u class="dn"></u></div></div><div class="twi"><i data-i="dde"></i><i data-i="dde"></i></div></div>
        <div class="list"><svg viewBox="477 871 423 63" id="shapes">
          <g fill="#c8c8c8" stroke="#222">
            <path d="M482.500 875.500h17v17h-17zM517.500 875.500l8.500 8.500-8.500 8.500-8.500-8.500zM543.500 875.500l8.500 6.500-3 10h-11l-3-10zM569.500 875.500l8 4.500v8l-8 4.500-8-4.500v-8zM596 875.500l8.500 17h-17zM622 876l8 13h-16zM648.500 875.500l2 6.500h6.500l-5 4 2 6.500-5.500-4-5.500 4 2-6.500-5-4h6.500zM674.500 875.500l4 4.500h-2v12.500h-4V880h-2z"/>
            <circle cx="701" cy="884" r="8.800"/><path d="M750.500 875.500h5.500v6h6v5h-6v6h-5.500v-6h-6v-5h6zM849.500 875.500l8 8.500-8 8.500z"/>
            <path d="M482.500 910.500q0-8.500 8.500-8.500t8.500 8.500zM508.500 913v-7q3-4 9-4v8q-2 2-9 3.500zM534.500 910.500q0-8 8.500-8.500v8.500z"/>
          </g>
          <path fill="#c8c8c8" d="M561 902h8v8.500h-8zM587.500 902h8v17h-8zM613.500 902v16.500h17zM648.500 902v16.500h-8zM674.500 902v16.500h8z"/>
          <path fill="none" stroke="#111" d="M561 902.500h8.500v8H561M596 902.500h-8.500v16.500M613.500 902v16.500M613.500 902l17 16.500M640 918.500l8-16.500M648.500 902v17M674.500 902v17M674.500 902l8 16.500"/>
          <path d="M727.500 875.500v17" stroke="#0c1f46"/><path d="M771 875l18 18m0-18l-18 18M823 875l10 9-10 9" fill="none" stroke="#666"/>
        </svg><i data-i="ddb"></i></div>
      </div>
      <div class="sb"><u class="upa"></u><b></b><u class="dn"></u></div>
    </div>
    <div class="okrow"><div class="btn def">Aceptar</div><div class="btn">Cancelar</div><div class="btn">Ayuda</div></div>
  </section>

  <div class="hl"></div>
  <svg class="arrow" viewBox="0 0 20 138"><path d="M10 0v135M2 127l8 8 8-8" fill="none" stroke="#2b3867" stroke-width="2"/></svg>
  <p class="caption">Elección y edición de símbolos</p>
</main>
<script src="app.js"></script>
</body>
</html>
```

FILE: styles.css
```css
* { box-sizing: border-box; margin: 0; padding: 0; }
body { background: #fff; font: 8.400px/11px "Open Sans", "Noto Sans", sans-serif; letter-spacing: -.2px; color: #111; }
ul { list-style: none; }
i, u, em, s { font-style: normal; text-decoration: none; flex: none; display: block; }
i svg { display: block; width: 100%; height: 100%; }
.defs { display: none; }
.tight { letter-spacing: -.400px; }
.sheet { position: relative; width: 1754px; height: 1240px; border: 2px solid #f4574f; padding: 238px 0 0 175px; overflow: hidden; }
.app { width: 1400px; height: 759px; display: flex; flex-direction: column; }

.title { height: 19px; display: flex; align-items: center; color: #999; padding: 1px 0 0 1px; flex: none; gap: 4px; }
.title > i { width: 12px; height: 12px; }
.wctl { margin-left: auto; display: flex; gap: 25px; padding-right: 14px; align-items: center; }
.wctl i { width: 8px; height: 8px; color: #888; }
.wctl .min { height: 1px; background: #888; }
.wctl .max { width: 7px; height: 7px; border: 1px solid #999; border-left-color: #ddd; }
.menu { height: 14px; background: #efefef; display: flex; color: #999; padding-left: 7px; line-height: 14px; gap: 9.700px; letter-spacing: 0; flex: none; }
.bar { height: 23px; flex: none; display: flex; align-items: center; background: linear-gradient(#fbfbfb, #efefef); border-bottom: 1px solid #b0b0b0; }
.bar > i { width: 18.120px; height: 18px; padding: 3px; }
.bar > .hand { padding: 2px; border: 1px solid #aaa; background: #e4e4e4; width: 17px; margin-right: 1px; }
.bar > .grip { width: 12.800px; height: 12px; background: radial-gradient(#bbb 35%, transparent 40%) 5px 0 / 3px 3px repeat-y; }
.bar > .grip:first-child { width: 9px; }
.bar > .grip + i + .grip { width: 11.600px; }
.dn { width: 9px; height: 3px; position: relative; }
.dn::before { content: ""; display: block; width: 1px; margin: auto; border: 2px solid transparent; border-top: 3px solid #555; border-bottom: 0; }

.work { flex: 1; display: flex; min-height: 0; }
.side { width: 32px; border-right: 2px solid #b4b4b4; background: linear-gradient(90deg, #fbfbfb, #ececec); padding: 3px 0 0 5px; }
.side .grip { width: 16px; height: 5px; margin: 0 0 0 5px; background: radial-gradient(#bbb 35%, transparent 40%) 0 0 / 3px 3px; }
.side p { height: 17.500px; display: flex; align-items: center; }
.side i { width: 13px; height: 13px; }
.side .m::after { content: ""; margin-left: 5px; border: 2.500px solid transparent; border-top: 3px solid #555; border-bottom: 0; }
.docks { width: 291px; background: #efefef; display: flex; flex-direction: column; padding-right: 4px; }
.dock { border-right: 1px solid #b4b4b4; height: 324px; display: flex; flex-direction: column; flex: none; }
.layers { height: auto; flex: 1; min-height: 0; }
.dock h2 { font-size: inherit; font-weight: 400; height: 15px; line-height: 15px; padding-left: 3px; display: flex; }
.layers h2 { height: 22px; line-height: 24px; }
.dctl { margin-left: auto; display: flex; gap: 2px; padding: 3px 1px; }
.dctl i { width: 8px; height: 8px; border: 1px solid #444; border-radius: 2px; }
.mini { height: 22px; display: flex; align-items: center; padding: 0 0 4px 3px; flex: none; }
.layers .mini { height: 19px; }
.mini i { width: 18px; height: 12px; padding: 0 3px; }
.layers .mini .dn { width: 8px; }
.tree { background: #fff; border-top: 1px solid #b4b4b4; flex: 1; }
.nav { padding-bottom: 0; }
.tree li { height: 13.120px; display: flex; align-items: center; padding-left: 17px; position: relative; white-space: nowrap; }
.tree li > i { width: 11px; height: 11px; margin-right: 6px; }
.tree .c::before { content: ""; position: absolute; left: 7px; border: 2.500px solid transparent; border-left: 3px solid #666; border-right: 0; }
.lay b, .ck { width: 10px; height: 10px; border: 1px solid #ccc; background: #fff; line-height: 8px; font-size: 10px; flex: none; font-family: "DejaVu Sans", sans-serif; font-style: normal; }
.lay b { margin-right: 5px; }
.tree.lay li > i { margin-right: 5px; width: 12px; height: 12px; }
.on { font-weight: 700; letter-spacing: -.160px; }
.cur { background: #efefef; }
.off { color: #b4b4b4; font-style: italic; font-weight: 700; letter-spacing: .12px; }
.canvas { flex: 1; border: 1px solid #b4b4b4; border-top: 0; background: #fff; min-width: 0; overflow: hidden; }
.canvas svg { display: block; width: 1075px; height: 660px; }
.land { fill: #e8ecf6; }
.roads { fill: none; stroke: #fff; stroke-width: 1; }
.pts { fill: none; stroke-width: 1.700; }
.a { stroke: #8313bd; } .b { stroke: #f71c93; } .pts .c { stroke: #3208d8; }
.bd { fill: #7381b3; } .bl { fill: #adb6d6; } .bb { fill: #5d6ba3; }

.status { height: 19px; flex: none; background: #efefef; border-top: 1px solid #b0b0b0; display: flex; align-items: center; padding-left: 3px; white-space: nowrap; }
.find { width: 186px; height: 15px; border: 1px solid #aaa; border-radius: 2px; background: #fff; display: flex; align-items: center; color: #777; padding-left: 5px; gap: 5px; letter-spacing: -.3px; }
.status i { width: 10px; height: 10px; }
.status span { width: 45px; flex: none; }
.status .s1 { width: 595px; padding-left: 5px; letter-spacing: -.340px; }
.status .s2 { width: 25px; } .status .s4 { width: 39px; margin-left: 6px; }
.status .s3 { margin: 0 6px 0 10px; width: 10px; }
.status .w66 + i { margin: 0 10px 0 4px; }
.status .ck { margin: 0 3px 0 6px; }
.status .s5 { margin: 0 3px 0 13px; } .status .s6 { width: 44px; } .status .s7 { margin-left: 7px; width: 12px; height: 12px; }
.fld { height: 15px; border: 1px solid #aaa; border-radius: 2px; background: #fff; display: flex; align-items: center; padding-left: 3px; flex: none; }
.w66 { width: 66px; padding-left: 2px; letter-spacing: -.3px; } .w58 { width: 58px; } .w63 { width: 63px; } .w60 { width: 60px; }
.fld u { margin-left: auto; }
.sp { width: 10px; height: 100%; border-left: 1px solid #bbb; display: flex; flex-direction: column; align-items: center; justify-content: center; gap: 2px; }
.sp::before, .sp::after { content: ""; border: 2.500px solid transparent; }
.sp::before { border-bottom: 3px solid #555; border-top: 0; }
.sp::after { border-top: 3px solid #555; border-bottom: 0; }

.win { position: absolute; background: #efefef; box-shadow: 0 3px 10px rgba(0,0,0,.4); display: flex; flex-direction: column; white-space: nowrap; }
.wt { height: 22px; background: #fff; display: flex; align-items: center; flex: none; padding: 0 7px 0 5px; gap: 4px; }
.wt > i { width: 12px; height: 12px; }
.wt .cl { margin-left: auto; width: 10px; height: 10px; }
.cb { height: 15px; border: 1px solid #aaa; border-top-color: #b5b5b5; border-radius: 2px; background: linear-gradient(#fff, #ebebeb); display: flex; align-items: center; padding-left: 3px; flex: 1; min-width: 0; }
.cb.wh { background: #fff; }
.cb > u { margin-left: auto; }
.cb > .dn { margin-right: 3px; }
.cb > i { width: 10px; height: 10px; margin-right: 3px; }
.btn { width: 58px; height: 16px; border: 1px solid #aaa; border-radius: 2px; background: linear-gradient(#fff, #f1f1f1); text-align: center; line-height: 14px; flex: none; }
.def { border-color: #3b9df0; }

.props { left: 417px; top: 326px; width: 650px; height: 581px; border: 1px solid #999; }
.props .wt { color: #999; padding-bottom: 3px; letter-spacing: -.05px; }
.pbody { flex: 1; display: flex; min-height: 0; }
.tabs { width: 109px; background: #5d5d5d; color: #f2f2f2; flex: none; }
.tabs li { height: 26.400px; display: flex; align-items: center; padding-left: 3px; gap: 6px; line-height: 11px; }
.tabs li i { width: 18px; height: 18px; }
.tabs li:nth-child(n+4) { letter-spacing: -.4px; }
.tabs .cur { color: #111; }
.tabs .srch { height: 16px; background: #fff; border: 1px solid #999; margin-bottom: 4px; }
.tabs .srch i { width: 10px; height: 10px; margin-left: 2px; }
.pform { flex: 1; padding: 1px 1px 1px 3px; display: flex; flex-direction: column; min-width: 0; }
.pform .h18 { height: 18px; flex: none; margin-bottom: 5px; }
.pform > .h15 { height: 16px; flex: none; margin: -1px 0 4px; }
.pr { display: flex; height: 17px; margin-bottom: 4.500px; flex: none; align-items: center; gap: 4px; }
.pr label { width: 70px; flex: none; }
.pr .cb { height: 17px; }
.pr small { color: #666; font-size: 8px; margin-right: 3px; }
.pr .eb { flex: none; width: 18px; padding-left: 3px; }
.ctr { justify-content: center; }
.ctr i { margin-right: 0 !important; }
.pr .pc { flex: none; width: 59px; height: 15px; padding-left: 2px; letter-spacing: -.3px; }
.pr > span { width: 29px; }
.pform > .ramp { height: 16px; margin-bottom: 27px; gap: 2px; }
.grad { flex: 1; height: 14px; margin-right: 1px; border: 1px solid #ddd; background: linear-gradient(90deg, #0000ff, #b000b0 70%, #ff008c); }
.ramp .rb { flex: none; width: 10px; padding: 0; height: 16px; }
.ramp .rb .dn { margin: 0; }
.ptab { flex: 1; background: #fff; border: 1px solid #bbb; border-width: 1px 1px 0 0; margin-bottom: 4px; }
.ptab div { height: 14px; background: linear-gradient(#f8f8f8, #eaeaea); }
.cls, .adv, .btns { justify-content: flex-end; }
.pr.cls { height: 16px; margin-bottom: 5px; } .pr.adv { height: 16px; margin-bottom: 47px; } .pr.btns { margin-bottom: 0; }
.cls > span { width: 25px; }
.pr .w33, .pr .w59 { flex: none; width: 33px; height: 15px; }
.pr .w59 { width: 59px; padding-left: 7px; }

.symb { left: 459px; top: 426px; width: 498px; height: 543px; border-top: 1px solid #1a6fb5; padding: 0; }
.top { display: flex; margin: 9px 8px 5px; height: 98px; }
.stree { width: 239px; border: 1px solid #b8b8b8; border-top: 0; background: #fff; }
.stree li { height: 13px; display: flex; align-items: center; gap: 6px; padding-left: 3px; }
.stree li i { width: 10px; height: 10px; color: #444; }
.stree li + li { padding-left: 33px; gap: 5px; } .stree li + li i { color: #34516e; }
.stree .dn { margin-right: -1px; }
.prev { width: 74px; height: 74px; margin: 12px 0 0 87px; }
.sbtn { display: flex; gap: 4px; margin: 0 8px; height: 22px; border-bottom: 1px solid #aaa; }
.sbtn i { width: 20.800px; height: 17px; border: 1px solid #aaa; border-radius: 2px; background: linear-gradient(#fff, #eee); padding: 2px; }
.sbtn .dis { border-color: #ccc; }
.scroll { flex: 1; display: flex; margin: 6px 8px 0; height: 348px; min-height: 0; }
.form { flex: 1; display: flex; flex-direction: column; }
.type { display: flex; height: 16px; align-items: center; margin: 0 7px 7.500px 1px; flex: none; }
.type label { width: 86px; letter-spacing: -.440px; }
.fr { display: flex; height: 23.350px; align-items: center; padding-left: 7px; flex: none; }
.fr label { width: 73px; flex: none; }
.fr > i { width: 16px; height: 12px; margin: 0 16px 0 8px; }
.fr .un { flex: none; width: 86px; margin-left: 6px; }
.fr .h17 { height: 17px; }
.cb s { width: 24px; height: 1px; background: #111; margin-right: 1px; }
.cb em { flex: 1; height: 12px; border-radius: 2px; }
.chk em { background: repeating-conic-gradient(#e3e3e3 0 25%, #fafafa 0 50%) 0 0 / 6px 6px; }
.chk { padding-left: 1px !important; opacity: .75; }
.blk em { background: #222; }
.cb > .dn.r { width: 9px; margin: 0 -1px 0 2px; height: 100%; border-left: 1px solid #bbb; padding-top: 5px; }
.clr { margin: 0 8px 0 auto !important; }
.cb > .clr { height: 8px; width: 10px; } .cb > .clr + u { margin-left: 0; }
.fr.off2 { height: 41px; }
.xy { flex: 1; display: flex; flex-direction: column; gap: 6px; }
.xy div { display: flex; gap: 5px; align-items: center; }
.off2 .un { margin-left: 5px; }
.off2 > .tl { width: 11px; height: 11px; margin: 0 -1px 0 5px; }
.off2 > .tl + i { margin-left: 12px; }
.fr.anc { height: 46px; }
.anc label { padding-top: 4px; }
.two { flex: 1; display: flex; flex-direction: column; gap: 8px; }
.two .cb { flex: none; }
.twi { display: flex; flex-direction: column; gap: 12px; margin: 0 16px 0 8px; } .twi i { width: 16px; height: 12px; }
.list { margin: 6.500px 16px 0 8px; display: flex; align-items: center; height: 64px; flex: none; }
.list svg#shapes { width: 423px; height: 64px; background: #fff; border-top: 1px solid #aaa; flex: none; }
.list i { width: 16px; height: 12px; margin: 18px 0 0 8px; }
.sb { width: 11px; border-left: 1px solid #bbb; background: #fbfbfb; display: flex; flex-direction: column; align-items: center; flex: none; }
.sb b { margin-top: auto; width: 100%; height: 40px; background: #e4e4e4; }
.sb .upa { height: 10px; width: 100%; border-bottom: 1px solid #bbb; padding-top: 3px; }
.sb .upa::before { content: ""; display: block; width: 1px; margin: auto; border: 2px solid transparent; border-bottom: 3px solid #444; border-top: 0; }
.sb .dn { height: 10px; padding-top: 4px; }
.okrow { display: flex; justify-content: flex-end; gap: 4.500px; margin: 8px 8.500px 8px; flex: none; }

.hl { position: absolute; left: 464px; top: 860px; width: 444px; height: 76px; border: 2px solid #2b3867; }
.arrow { position: absolute; left: 627px; top: 946px; width: 20px; height: 138px; }
.caption { font-size: 24.250px; line-height: 32px; letter-spacing: 0; color: #2b3867; margin: 93px 0 0 459px; }
```

FILE: app.js
```js
// Fill every icon holder with its symbol.
function icon(name) {
  return '<svg><use href="#' + name + '"/></svg>';
}
document.querySelectorAll('[data-i]').forEach(function (el) {
  el.innerHTML = icon(el.dataset.i);
});
document.querySelectorAll('[data-icons]').forEach(function (bar) {
  bar.innerHTML = bar.dataset.icons.split(' ').map(function (n) {
    if (n === '|') return '<u class="grip"></u>';
    if (n === 'v') return '<u class="dn"></u>';
    return '<i class="' + n + '">' + icon(n) + '</i>';
  }).join('');
});

// Building footprints: [density, dark share, polygon points...]
var blocks = [
  [.5, .3, 1068,416, 1090,417, 1090,430, 1080,436, 1068,430],
  [.45, .4, 1078,493, 1086,490, 1094,500, 1092,508, 1080,502],
  [.5, .3, 1093,511, 1104,510, 1103,524, 1095,522],
  [.5, .3, 1068,520, 1085,532, 1091,542, 1068,541],
  [.45, .35, 1068,547, 1098,548, 1104,562, 1113,580, 1105,586, 1082,604, 1068,608],
  [.5, .4, 1106,596, 1124,588, 1148,597, 1156,606, 1130,607, 1107,603],
  [.25, .5, 1080,612, 1105,612, 1118,622, 1104,630, 1088,634],
  [.6, .5, 1068,648, 1084,640, 1120,627, 1125,613, 1156,612, 1160,625, 1156,640, 1148,655, 1137,660, 1110,668, 1098,690, 1068,697],
  [.4, .4, 1068,612, 1078,614, 1090,638, 1072,645],
  [.5, .5, 1118,666, 1137,664, 1139,680, 1112,684],
  [.5, .45, 1106,686, 1138,682, 1140,712, 1118,716, 1085,704, 1084,700],
  [.5, .45, 1141,662, 1157,661, 1160,672, 1170,676, 1169,696, 1150,709, 1142,702],
  [.7, .55, 1217,520, 1228,522, 1234,530, 1230,536, 1216,534],
  [.4, .4, 1174,526, 1190,530, 1214,518, 1216,543, 1200,544, 1184,540],
  [.45, .4, 1178,551, 1205,548, 1209,557, 1187,571],
  [.45, .4, 1184,580, 1208,563, 1224,574, 1200,604, 1190,604, 1180,590],
  [.2, .5, 1163,604, 1180,580, 1190,604, 1175,606],
  [.45, .5, 1205,603, 1222,592, 1240,604, 1225,607],
  [.45, .3, 1163,611, 1189,612, 1190,632, 1178,630],
  [.5, .5, 1200,614, 1233,613, 1233,638, 1220,632, 1196,630],
  [.5, .3, 1242,612, 1264,612, 1264,638, 1242,638],
  [.65, .5, 1269,612, 1277,612, 1277,634, 1269,634],
  [.4, .8, 1312,618, 1334,621, 1330,627, 1312,625],
  [.35, .4, 1070,737, 1098,740, 1105,755, 1068,762],
  [.35, .4, 1068,765, 1100,762, 1090,782, 1070,792],
  [.5, .4, 1108,757, 1123,755, 1121,780, 1120,795, 1101,793],
  [.6, .5, 1127,745, 1138,737, 1160,746, 1180,765, 1165,772, 1148,765, 1128,758],
  [.5, .4, 1160,770, 1175,768, 1150,796, 1144,790],
  [.25, .8, 1180,760, 1192,750, 1208,755, 1205,770, 1218,785, 1215,795, 1195,788, 1183,775],
  [.4, .3, 1068,798, 1078,800, 1080,810, 1068,826],
  [.2, .8, 1085,808, 1106,805, 1106,834, 1098,834, 1096,820, 1080,828],
  [.65, .6, 1068,848, 1104,834, 1106,846, 1068,860],
  [.7, .5, 1104,836, 1122,832, 1126,845, 1126,875, 1108,877, 1104,850],
  [.5, .3, 1088,859, 1102,859, 1096,872, 1088,873],
  [.45, .3, 1125,832, 1145,818, 1159,842, 1150,848, 1130,838],
  [.3, .7, 1133,850, 1152,855, 1146,890, 1130,885, 1138,870],
  [.35, .5, 1104,880, 1118,878, 1130,888, 1124,894, 1108,889],
  [.3, .6, 1155,898, 1162,888, 1190,883, 1200,895, 1206,916, 1190,922, 1168,910],
  [.45, .6, 1238,938, 1246,925, 1250,930, 1240,945, 1210,975, 1205,977, 1222,958],
  [.1, .6, 1228,916, 1260,912, 1285,920, 1262,938, 1245,930],
  [.5, .3, 1308,740, 1311,740, 1316,797, 1313,797, 1308,762],
  [.5, .3, 1313,800, 1316,800, 1300,838, 1298,840],
  [.3, .6, 1267,900, 1288,888, 1288,892, 1270,906],
  [.6, .8, 852,970, 863,970, 863,979, 852,979],
  [.5, .6, 873,970, 930,970, 950,979, 873,979],
  [.45, .6, 955,940, 964,942, 972,958, 968,976, 958,965],
  [.25, .8, 984,918, 1040,906, 1005,924],
  [.0015, .8, 1180,410, 1280,410, 1325,500, 1330,600, 1240,590, 1180,500],
  [.002, .8, 1070,430, 1160,450, 1140,500, 1080,500],
  [.001, .8, 1180,790, 1290,760, 1280,860, 1200,860],
  [.35, .8, 705,323, 711,323, 711,328, 705,328],
  [.12, .6, 892,319, 915,319, 915,327, 892,327],
  [.12, .7, 1327,570, 1347,560, 1345,590, 1325,592],
  [.3, .7, 1220,717, 1226,722, 1226,733, 1219,728]
];
// Large single buildings: x, y, width, height
var big = [
  [1182,461,3,21],[1187,467,7,10],[1193,455,2,33],[1252,447,1,28],[1254,459,2,4],
  [1119,540,12,4],[1120,546,5,10],[1127,547,3,9],[1134,549,5,6],[1123,566,4,3],[1115,552,2,6],
  [1150,627,8,6],[1156,643,5,6],[1165,644,3,5],[1286,622,16,6],[1334,562,3,6],[1335,566,8,6],[1326,584,6,4],
  [1079,516,4,3],[1133,504,1,7],[1134,508,8,1],[1215,434,4,2],[1180,823,3,5],[1167,880,10,3],[1176,875,4,5],
  [1205,927,4,6],[1250,597,6,4],[1238,546,4,5],[959,949,8,4],[1201,616,3,5]
];
// Rows of narrow buildings beside roads: polylines
var rows = [
  '1226,508 1231,519 1238,528', '1243,534 1250,545 1247,562 1240,569 1230,573',
  '1224,592 1234,601', '1081,517 1094,536', '1104,550 1114,567 1125,578'
];
var seed = 11;
function rnd() {
  seed = (seed * 16807) % 2147483647;
  return seed / 2147483647;
}
// Uneven density: street blocks of a few pixels differ from each other.
function patch(x, y) {
  var s = Math.sin(Math.floor((x + y * .4) / 5) * 12.9898 + Math.floor((y - x * .4) / 4) * 78.233) * 43758.5453;
  return .35 + 1.05 * (s - Math.floor(s));
}
function inside(x, y, p) {
  var hit = false;
  for (var i = 2, j = p.length - 2; i < p.length; j = i, i += 2) {
    if ((p[i + 1] > y) !== (p[j + 1] > y) &&
        x < (p[j] - p[i]) * (y - p[i + 1]) / (p[j + 1] - p[i + 1]) + p[i]) hit = !hit;
  }
  return hit;
}
var dark = '', light = '', solid = '';
blocks.forEach(function (p) {
  var xs = p.filter(function (v, i) { return i > 1 && i % 2 === 0; });
  var ys = p.filter(function (v, i) { return i > 1 && i % 2 === 1; });
  for (var y = Math.min.apply(0, ys); y < Math.max.apply(0, ys); y++) {
    for (var x = Math.min.apply(0, xs); x < Math.max.apply(0, xs); x++) {
      var k = patch(x, y);
      if (rnd() > p[0] * 1.35 * k || !inside(x, y, p)) continue;
      var d = 'M' + x + ' ' + y + 'h' + (rnd() > .75 ? 2 : 1) + 'v1h-1z';
      if (rnd() < p[1] * .8 * k) dark += d; else light += d;
    }
  }
});
big.forEach(function (b) {
  solid += 'M' + b[0] + ' ' + b[1] + 'h' + b[2] + 'v' + b[3] + 'h-' + b[2] + 'z';
});
document.getElementById('buildings').innerHTML =
  '<path class="bl" d="' + light + '"/><path class="bd" d="' + dark + '"/><path class="bb" d="' + solid + '"/>' +
  rows.map(function (r) {
    return '<polyline points="' + r + '" fill="none" stroke="#7987b8" stroke-width="2.200" stroke-dasharray="3 .7"/>';
  }).join('');
```
